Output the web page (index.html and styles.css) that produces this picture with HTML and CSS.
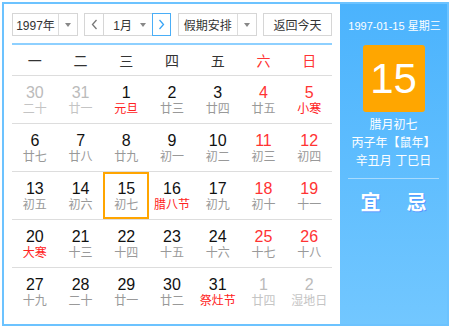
FILE: index.html
```html
<!DOCTYPE html>
<html lang="zh-CN">
<head>
  <meta charset="UTF-8" />
  <meta name="viewport" content="width=device-width, initial-scale=1" />
  <title>万年历</title>
  <link rel="stylesheet" href="styles.css">
</head>
<body>
  <div class="calendar">
    <div class="main">
      <div class="toolbar">
        <div class="select year">
          <span class="select-text">1997年</span>
          <span class="select-arrow"><i class="caret"></i></span>
        </div>
        <div class="month-nav">
          <button class="nav prev" type="button">
            <svg width="7" height="11" viewBox="0 0 7 11"><path d="M5.5 1 L1.5 5.5 L5.5 10" fill="none" stroke="#777" stroke-width="1.3"/></svg>
          </button>
          <div class="month-field">
            <span>1月</span>
            <i class="caret"></i>
          </div>
          <button class="nav next" type="button">
            <svg width="7" height="11" viewBox="0 0 7 11"><path d="M1.5 1 L5.5 5.5 L1.5 10" fill="none" stroke="#3aa4f5" stroke-width="1.3"/></svg>
          </button>
        </div>
        <div class="select holiday">
          <span class="select-text">假期安排</span>
          <span class="select-arrow"><i class="caret"></i></span>
        </div>
        <button class="today" type="button">返回今天</button>
      </div>

      <div class="weekdays">
        <span>一</span><span>二</span><span>三</span><span>四</span><span>五</span>
        <span class="red">六</span><span class="red">日</span>
      </div>

      <div id="weeks"></div>
    </div>

    <div class="side">
      <div class="side-date">1997-01-15 星期三</div>
      <div class="big-day">15</div>
      <div class="side-lunar">
        <div>腊月初七</div>
        <div>丙子年【鼠年】</div>
        <div>辛丑月 丁巳日</div>
      </div>
      <div class="side-line"></div>
      <div class="yiji"><span>宜</span><span>忌</span></div>
    </div>
  </div>

  <script>
    // [日期, 农历, 类型]  o = 其他月份, f = 节日, s = 选中
    const days = [
      [30, "二十", "o"], [31, "廿一", "o"], [1, "元旦", "f"], [2, "廿三"], [3, "廿四"], [4, "廿五"], [5, "小寒", "f"],
      [6, "廿七"], [7, "廿八"], [8, "廿九"], [9, "初一"], [10, "初二"], [11, "初三"], [12, "初四"],
      [13, "初五"], [14, "初六"], [15, "初七", "s"], [16, "腊八节", "f"], [17, "初九"], [18, "初十"], [19, "十一"],
      [20, "大寒", "f"], [21, "十三"], [22, "十四"], [23, "十五"], [24, "十六"], [25, "十七"], [26, "十八"],
      [27, "十九"], [28, "二十"], [29, "廿一"], [30, "廿二"], [31, "祭灶节", "f"], [1, "廿四", "o"], [2, "湿地日", "o"]
    ];

    const weeks = document.getElementById("weeks");
    for (let w = 0; w < 5; w++) {
      const row = document.createElement("div");
      row.className = "week";
      for (let d = 0; d < 7; d++) {
        const [num, lunar, type] = days[w * 7 + d];
        const cell = document.createElement("div");
        cell.className = "day";
        if (type === "o") cell.classList.add("other");
        if (type === "f") cell.classList.add("festival");
        if (type === "s") cell.classList.add("selected");
        if (d >= 5) cell.classList.add("weekend");
        cell.innerHTML = `<span class="num">${num}</span><span class="lunar">${lunar}</span>`;
        row.appendChild(cell);
      }
      weeks.appendChild(row);
    }
  </script>
</body>
</html>
```

FILE: styles.css
```css
body {
  margin: 0;
  font-family: "Liberation Sans", "Noto Sans CJK SC", sans-serif;
  background: #fff;
}

.calendar {
  display: flex;
  margin: 2px;
  width: 443px;
  height: 320px;
  border: 2px solid #6cc3ff;
  background: #fff;
}

.main {
  width: 336px;
  padding: 9px 8px 0;
  box-sizing: border-box;
}

/* toolbar */
.toolbar {
  display: flex;
  justify-content: space-between;
  height: 23px;
  padding-bottom: 7px;
  border-bottom: 2px solid #8ed0ff;
}

.select {
  display: flex;
  height: 23px;
  box-sizing: border-box;
  border: 1px solid #d6d6d6;
  background: #fff;
  font-size: 12px;
  color: #333;
}

.select-text {
  flex: 1;
  display: flex;
  align-items: center;
  justify-content: center;
}

.select-arrow {
  width: 18px;
  display: flex;
  align-items: center;
  justify-content: center;
  border-left: 1px solid #dcdcdc;
}

.caret {
  display: block;
  width: 0;
  height: 0;
  border-top: 4px solid #888;
  border-left: 3.5px solid transparent;
  border-right: 3.5px solid transparent;
}

.year {
  width: 66px;
}

.holiday {
  width: 79px;
}

.month-nav {
  display: flex;
  width: 87px;
  height: 23px;
}

.nav {
  width: 20px;
  height: 23px;
  padding: 0;
  border: 1px solid #d6d6d6;
  background: #fff;
  display: flex;
  align-items: center;
  justify-content: center;
}

.nav.next {
  width: 19px;
  border-color: #4aaef7;
}

.month-field {
  flex: 1;
  display: flex;
  align-items: center;
  justify-content: space-between;
  padding: 0 6px 0 9px;
  border-top: 1px solid #d6d6d6;
  border-bottom: 1px solid #d6d6d6;
  font-size: 12px;
  color: #333;
}

.today {
  width: 69px;
  height: 23px;
  padding: 0;
  border: 1px solid #d6d6d6;
  background: #fff;
  font-family: inherit;
  font-size: 12px;
  color: #333;
}

/* grid */
.weekdays {
  display: flex;
  height: 30px;
  align-items: center;
  border-bottom: 1px solid #ddd;
  font-size: 14px;
  color: #333;
}

.weekdays span {
  flex: 1;
  text-align: center;
}

.red {
  color: #f33;
}

.week {
  display: flex;
  height: 48px;
  box-sizing: border-box;
  border-bottom: 1px solid #ddd;
}

.week:last-child {
  border-bottom: none;
}

.day {
  flex: 1;
  display: flex;
  flex-direction: column;
  align-items: center;
  padding-top: 6px;
  border: 2px solid transparent;
}

.day .num {
  font-size: 16px;
  line-height: 18px;
  color: #111;
}

.day .lunar {
  font-size: 12px;
  line-height: 14px;
  color: #999;
}

.day.weekend .num {
  color: #f33;
}

.day.festival .lunar {
  color: #f22;
}

.day.other .num {
  color: #bbb;
}

.day.other .lunar {
  color: #c4c4c4;
}

.day.selected {
  border-color: #ffa500;
}

/* side panel */
.side {
  width: 107px;
  padding-top: 14px;
  box-sizing: border-box;
  background: linear-gradient(#4bb3fd, #72c7ff);
  color: #fff;
  text-align: center;
}

.side-date {
  font-size: 11px;
  line-height: 16px;
  padding-left: 2px;
}

.big-day {
  width: 62px;
  height: 67px;
  margin: 11px auto 0;
  background: #ffa600;
  border-radius: 3px;
  font-size: 42px;
  line-height: 67px;
}

.side-lunar {
  margin-top: 4px;
  font-size: 12px;
  line-height: 18px;
}

.side-line {
  height: 1px;
  margin: 8px 8px 0;
  background: rgba(255, 255, 255, 0.45);
}

.yiji {
  display: flex;
  justify-content: center;
  gap: 26px;
  margin-top: 10px;
  font-size: 20px;
  line-height: 28px;
  font-weight: bold;
  text-shadow: 1px 1px 0 rgba(80, 110, 255, 0.5);
}
```
